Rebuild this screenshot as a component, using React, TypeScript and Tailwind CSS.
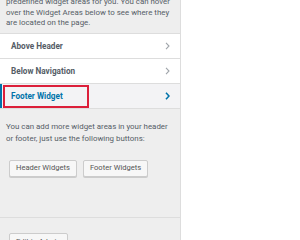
import React from 'react';

interface Area {
  title: string;
  active?: boolean;
}

const areas: Area[] = [
  { title: 'Above Header' },
  { title: 'Below Navigation' },
  { title: 'Footer Widget', active: true },
];

function Chevron({ active }: { active?: boolean }) {
  return (
    <svg width="5" height="8" viewBox="0 0 5 8" className="shrink-0">
      <polyline
        points="1,0.8 4,4 1,7.2"
        fill="none"
        stroke={active ? '#0073aa' : '#a0a5aa'}
        strokeWidth={active ? 1.6 : 1.1}
      />
    </svg>
  );
}

function AreaRow({ area }: { area: Area }) {
  return (
    <div
      className={`relative flex items-center justify-between h-[25px] border-b border-[#dddddd] pl-[11px] pr-[10px] ${
        area.active ? 'bg-[#f3f3f5]' : 'bg-white'
      }`}
    >
      {area.active && <div className="absolute left-0 top-0 bottom-0 w-[2px] bg-[#0073aa]" />}
      <span
        className={`text-[8.2px] font-bold leading-none ${area.active ? 'text-[#0073aa]' : 'text-[#555d66]'}`}
      >
        {area.title}
      </span>
      <Chevron active={area.active} />
      {area.active && (
        <div className="absolute left-[3px] top-[1px] w-[86px] h-[23px] border-2 border-[#dc1f3a]" />
      )}
    </div>
  );
}

function WpButton({ children }: { children: React.ReactNode }) {
  return (
    <button className="h-[17px] px-[6px] bg-[#f7f7f7] border border-[#cccccc] rounded-[2px] shadow-[0_1px_0_#cccccc] text-[7.6px] leading-none text-[#555555]">
      {children}
    </button>
  );
}

export default function App() {
  return (
    <div className="flex w-[300px] h-[240px] overflow-hidden bg-white font-['Roboto',sans-serif]">
      <div className="w-[181px] shrink-0 bg-[#eeeeee] border-r border-[#dddddd]">
        <div className="px-[6px] pb-[4px] -mt-[3px] text-[7.9px] leading-[10.6px] text-[#555d66]">
          <div className="whitespace-nowrap">predefined widget areas for you. You can hover</div>
          <div className="whitespace-nowrap">over the Widget Areas below to see where they</div>
          <div className="whitespace-nowrap">are located on the page.</div>
        </div>

        <div className="border-t border-[#dddddd]">
          {areas.map((a) => (
            <AreaRow key={a.title} area={a} />
          ))}
        </div>

        <div className="pt-[12px] px-[6px] text-[7.9px] leading-[12px] text-[#555d66]">
          <div className="whitespace-nowrap">You can add more widget areas in your header</div>
          <div className="whitespace-nowrap">or footer, just use the following buttons:</div>
        </div>

        <div className="flex gap-[6px] pl-[9px] mt-[15px]">
          <WpButton>Header Widgets</WpButton>
          <WpButton>Footer Widgets</WpButton>
        </div>

        <div className="mt-[40px] border-t border-[#dddddd] pt-[9px] pl-[9px]">
          <WpButton>Edit in Admin</WpButton>
        </div>
      </div>
      <div className="flex-1" />
    </div>
  );
}
